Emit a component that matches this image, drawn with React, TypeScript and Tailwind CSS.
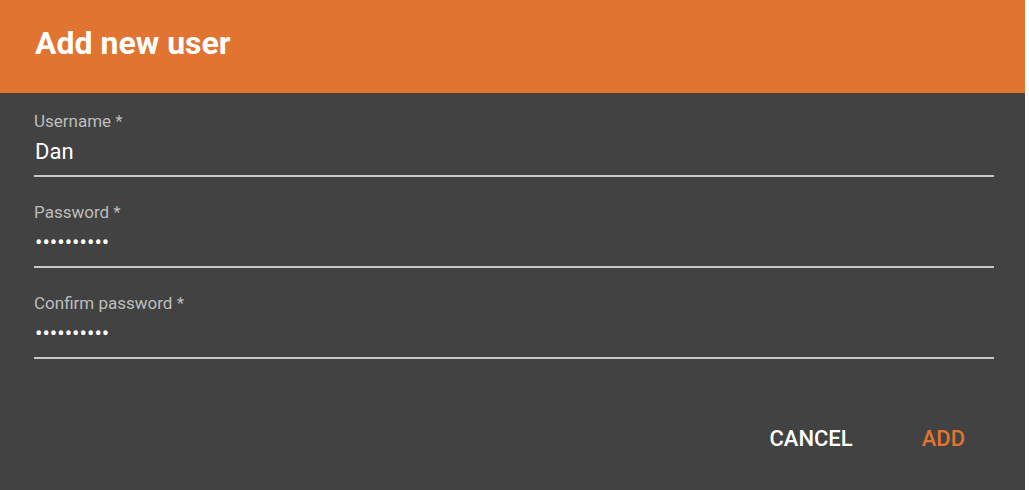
import React from "react";

const fields = [
  { label: "Username *", value: "Dan", pw: false },
  { label: "Password *", value: "••••••••••", pw: true },
  { label: "Confirm password *", value: "••••••••••", pw: true },
];

export default function App() {
  return (
    <div className="w-[1029px] h-[490px] bg-white" style={{ fontFamily: "Roboto, 'Liberation Sans', sans-serif" }}>
      <div className="w-[1025px] h-[490px] bg-[#424242] flex flex-col">
        <div className="h-[93px] shrink-0 bg-[#e07430] px-[35px] pt-[27px]">
          <h1 className="text-[32px] font-bold text-white leading-none">Add new user</h1>
        </div>
        <div className="pl-[34px] pr-[31px] pt-[18px] flex flex-col gap-[25px]">
          {fields.map((f) => (
            <div key={f.label} className="flex flex-col border-b-2 border-[#c8c8c8]">
              <div className="text-[17px] text-[#bdbdbd] leading-[20px] h-[20px]">{f.label}</div>
              <div
                className={
                  f.pw
                    ? "mt-[6px] h-[38px] text-[22px] text-white leading-[30px] pl-px"
                    : "mt-[6px] h-[38px] text-[22px] text-white leading-[30px] pl-px"
                }
              >
                {f.value}
              </div>
            </div>
          ))}
        </div>
        <div className="flex-1 flex items-end justify-end pb-[40px] pr-[60px] gap-[69px]">
          <button className="text-[22px] font-medium text-white leading-none">CANCEL</button>
          <button className="text-[22px] font-medium text-[#e07430] leading-none">ADD</button>
        </div>
      </div>
    </div>
  );
}
